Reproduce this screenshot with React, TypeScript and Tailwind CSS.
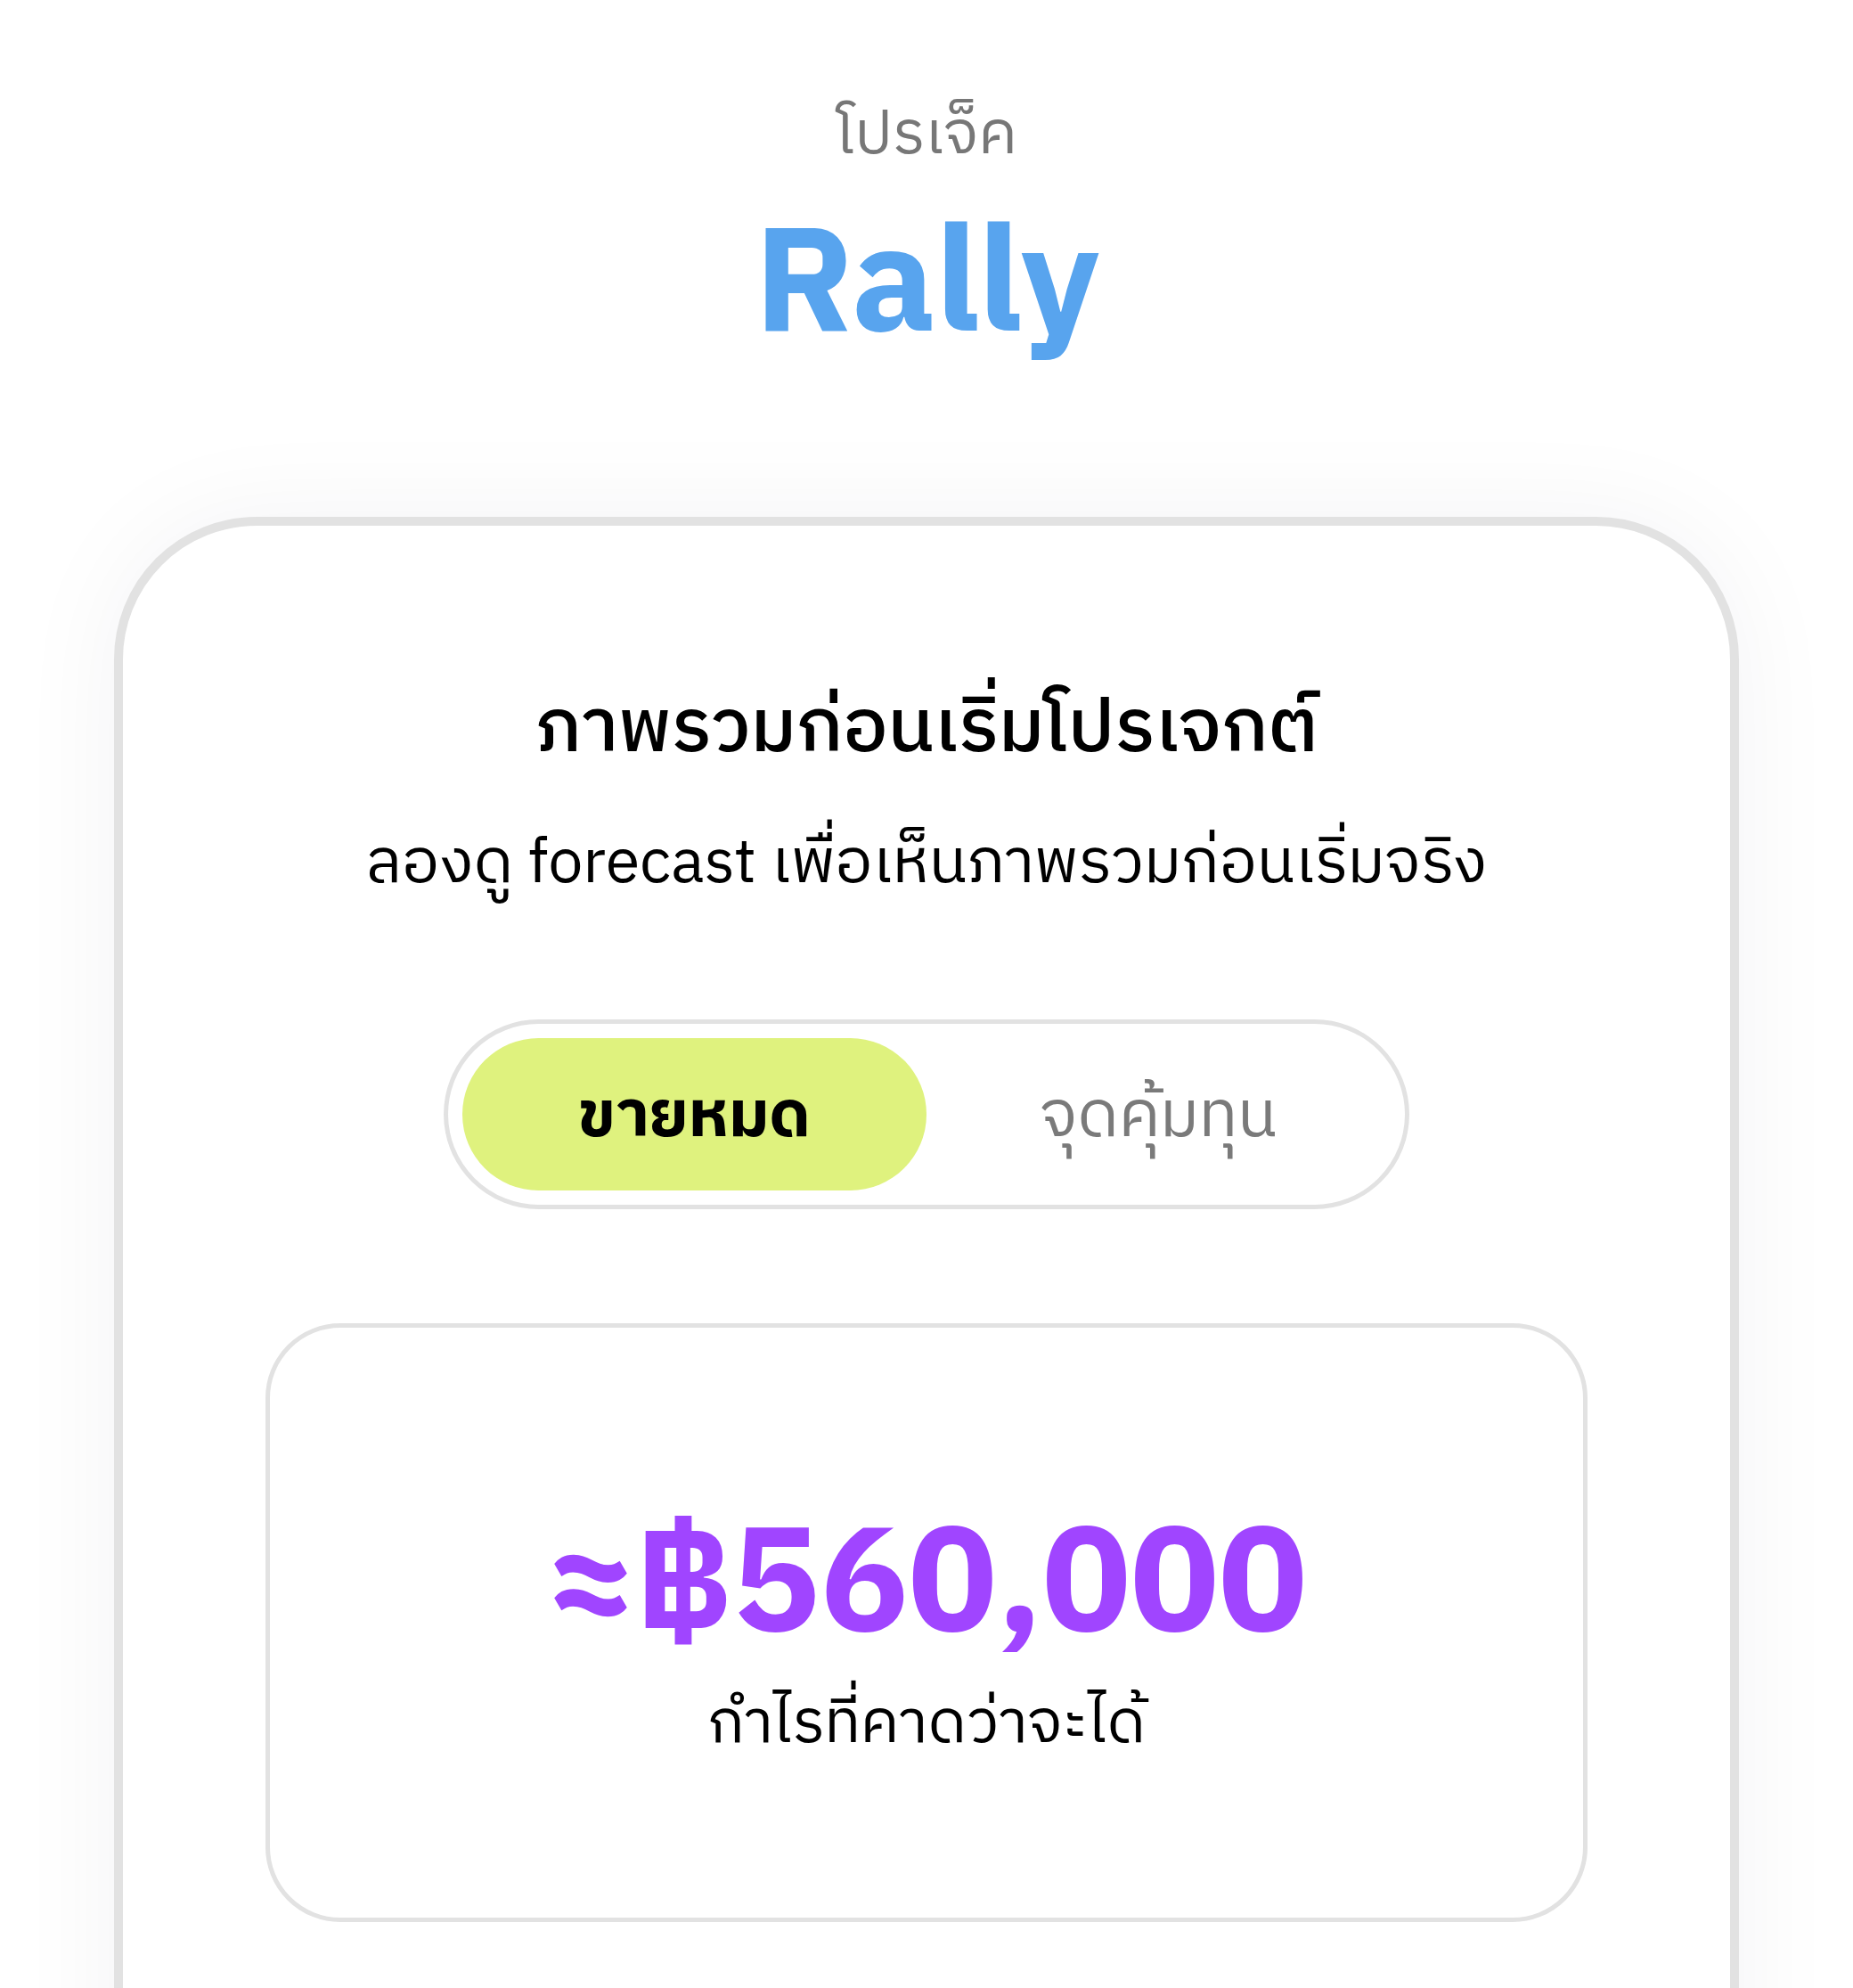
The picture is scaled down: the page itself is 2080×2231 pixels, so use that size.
import React from "react";

export default function App() {
  return (
    <div className="min-h-screen bg-white font-['IBM_Plex_Sans_Thai','Noto_Sans_Thai',sans-serif] text-black overflow-hidden">
      <div className="flex flex-col items-center pt-[102px]">
        <div className="text-[68px] leading-[100px] text-[#777777]">โปรเจ็ค</div>
        <div className="mt-[26px] text-[166px] font-bold leading-[190px] text-[#58a4ee] tracking-[-1px]">Rally</div>
      </div>
      <div className="mx-[128px] mt-[162px] rounded-[160px] border-[10px] border-[#e2e2e2] bg-white px-[160px] pt-[174px] pb-[300px] shadow-[0_0_120px_rgba(20,20,60,0.05)]">
        <div className="flex flex-col items-center">
          <h1 className="text-[84px] font-medium leading-[110px] text-black">ภาพรวมก่อนเริ่มโปรเจกต์</h1>
          <p className="mt-[46px] text-[70px] leading-[100px] text-black">ลองดู forecast เพื่อเห็นภาพรวมก่อนเริ่มจริง</p>
          <div className="mt-[124px] grid h-[213px] w-[1084px] grid-cols-2 rounded-full border-[5px] border-[#e2e2e2] p-[16px]">
            <div className="flex items-center justify-center rounded-full bg-[#dff27e] pt-[8px] text-[73px] font-bold text-black">ขายหมด</div>
            <div className="flex items-center justify-center pt-[8px] text-[73px] text-[#7a7a7a]">จุดคุ้มทุน</div>
          </div>
          <div className="mt-[128px] flex h-[672px] w-full flex-col items-center justify-center rounded-[84px] border-[5px] border-[#e2e2e2] pt-[20px]">
            <div className="text-[165px] font-bold leading-[200px] text-[#a045ff]">≈฿560,000</div>
            <div className="mt-[8px] text-[68px] leading-[90px] text-black">กำไรที่คาดว่าจะได้</div>
          </div>
        </div>
      </div>
    </div>
  );
}
